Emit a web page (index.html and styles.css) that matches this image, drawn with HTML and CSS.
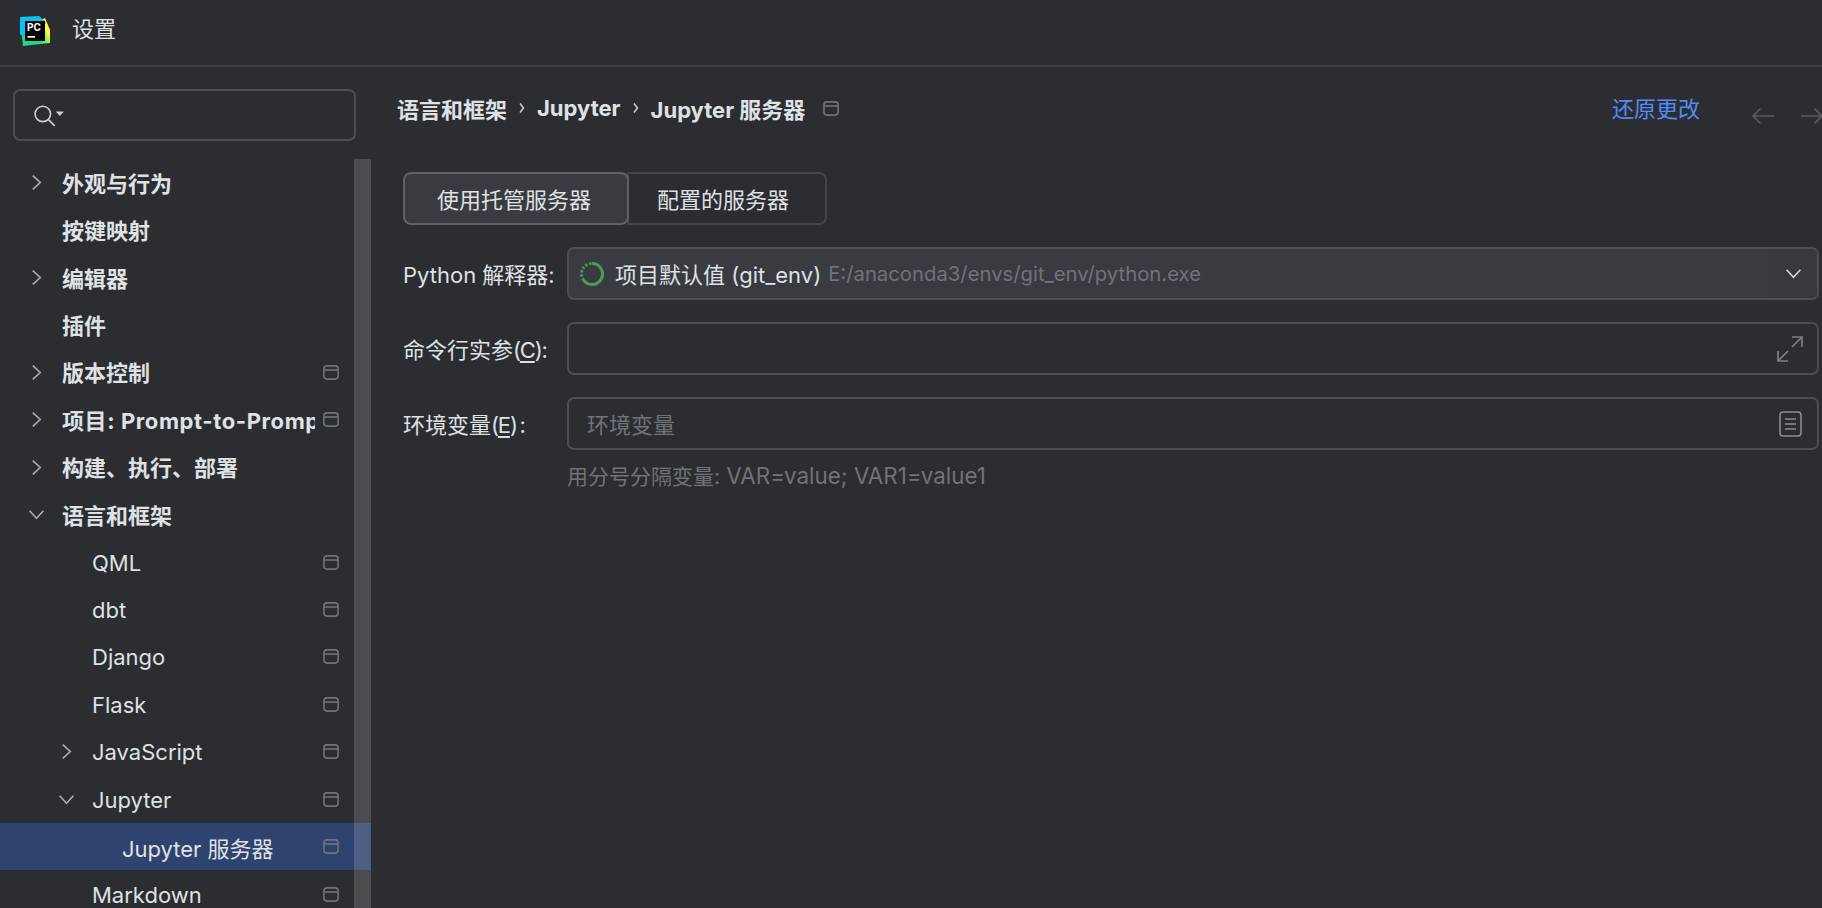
FILE: index.html
```html
<!DOCTYPE html>
<html lang="zh">
<head>
<meta charset="utf-8">
<title>设置</title>
<link rel="stylesheet" href="styles.css">
</head>
<body>
<svg class="defs" width="0" height="0" aria-hidden="true">
  <defs>
    <symbol id="pin" viewBox="0 0 16 15"><rect x="0.9" y="0.9" width="14.2" height="13.2" rx="3" fill="none" stroke="currentColor" stroke-width="1.6"/><path d="M1 5h14" stroke="currentColor" stroke-width="1.6"/></symbol>
    <symbol id="right" viewBox="0 0 10 16"><path d="M1.5 1.5 8.5 8l-7 6.5" fill="none" stroke="currentColor" stroke-width="1.6"/></symbol>
    <symbol id="down" viewBox="0 0 16 10"><path d="M1.5 1.5 8 8.5l6.5-7" fill="none" stroke="currentColor" stroke-width="1.6"/></symbol>
  </defs>
</svg>
<header class="titlebar">
  <svg class="logo" viewBox="0 0 30 30" aria-hidden="true">
    <defs>
      <linearGradient id="lg" x1="0" y1="1" x2="1" y2="0.2"><stop offset="0" stop-color="#21d789"/><stop offset="0.45" stop-color="#21d789"/><stop offset="0.8" stop-color="#fcf84a"/></linearGradient>
    </defs>
    <path d="M2 20 3 30 30 27 30 14 25 2 10 10Z" fill="url(#lg)"/>
    <path d="M0 1 19 0 26 6 20 20 2 20 0 18Z" fill="#07c3f2"/>
    <rect x="5" y="5" width="20" height="20" fill="#000"/>
    <rect x="7.5" y="20" width="7.5" height="1.7" fill="#fff"/>
    <text x="7" y="15" class="logo-text">PC</text>
  </svg>
  <span class="title">设置</span>
</header>
<div class="layout">
  <aside class="sidebar">
    <div class="search">
      <svg class="search-icon" viewBox="0 0 32 22" aria-hidden="true"><circle cx="9.5" cy="9.5" r="7.5" fill="none" stroke="#ced0d6" stroke-width="1.6"/><path d="m15 15 6 6" stroke="#ced0d6" stroke-width="1.6" fill="none"/><path d="M22 7h8l-4 4.500z" fill="#ced0d6"/></svg>
    </div>
    <nav class="tree">
      <div class="row top"><svg class="chev"><use href="#right"/></svg><span class="label">外观与行为</span></div>
      <div class="row top"><span class="chev"></span><span class="label">按键映射</span></div>
      <div class="row top"><svg class="chev"><use href="#right"/></svg><span class="label">编辑器</span></div>
      <div class="row top"><span class="chev"></span><span class="label">插件</span></div>
      <div class="row top"><svg class="chev"><use href="#right"/></svg><span class="label">版本控制</span><svg class="pin"><use href="#pin"/></svg></div>
      <div class="row top"><svg class="chev"><use href="#right"/></svg><span class="label label-wide">项目: Prompt-to-Prompt</span><svg class="pin"><use href="#pin"/></svg></div>
      <div class="row top"><svg class="chev"><use href="#right"/></svg><span class="label">构建、执行、部署</span></div>
      <div class="row top"><svg class="chev chev-down"><use href="#down"/></svg><span class="label">语言和框架</span></div>
      <div class="row lvl2"><span class="chev"></span><span class="label">QML</span><svg class="pin"><use href="#pin"/></svg></div>
      <div class="row lvl2"><span class="chev"></span><span class="label">dbt</span><svg class="pin"><use href="#pin"/></svg></div>
      <div class="row lvl2"><span class="chev"></span><span class="label">Django</span><svg class="pin"><use href="#pin"/></svg></div>
      <div class="row lvl2"><span class="chev"></span><span class="label">Flask</span><svg class="pin"><use href="#pin"/></svg></div>
      <div class="row lvl2"><svg class="chev"><use href="#right"/></svg><span class="label">JavaScript</span><svg class="pin"><use href="#pin"/></svg></div>
      <div class="row lvl2"><svg class="chev chev-down"><use href="#down"/></svg><span class="label">Jupyter</span><svg class="pin"><use href="#pin"/></svg></div>
      <div class="row lvl3 selected"><span class="chev"></span><span class="label">Jupyter 服务器</span><svg class="pin"><use href="#pin"/></svg></div>
      <div class="row lvl2"><span class="chev"></span><span class="label">Markdown</span><svg class="pin"><use href="#pin"/></svg></div>
      <div class="scrollbar"></div>
    </nav>
  </aside>
  <main class="content">
    <div class="head">
      <div class="crumbs">
        <span>语言和框架</span>
        <svg class="sep" viewBox="0 0 6 12" aria-hidden="true"><path d="M1 1.500 4.500 6 1 10.500" fill="none" stroke="currentColor" stroke-width="1.500"/></svg>
        <span>Jupyter</span>
        <svg class="sep" viewBox="0 0 6 12" aria-hidden="true"><path d="M1 1.500 4.500 6 1 10.500" fill="none" stroke="currentColor" stroke-width="1.500"/></svg>
        <span>Jupyter 服务器</span>
        <svg class="pin crumb-pin"><use href="#pin"/></svg>
      </div>
      <a class="revert">还原更改</a>
      <svg class="arrow arrow-left" viewBox="0 0 24 18" aria-hidden="true"><path d="M23 9H2M9.500 1.500 2 9l7.500 7.500" fill="none" stroke="currentColor" stroke-width="1.600"/></svg>
      <svg class="arrow arrow-right" viewBox="0 0 24 18" aria-hidden="true"><path d="M1 9h21M14.500 1.500 22 9l-7.500 7.500" fill="none" stroke="currentColor" stroke-width="1.600"/></svg>
    </div>
    <div class="segments">
      <div class="seg active">使用托管服务器</div>
      <div class="seg second">配置的服务器</div>
    </div>
    <form class="form">
      <label class="flabel">Python 解释器:</label>
      <div class="field combo">
        <svg class="spinner" viewBox="0 0 26 26" aria-hidden="true"><path d="M13 2.500A10.500 10.500 0 1 1 4.500 19.200" fill="none" stroke="#499c54" stroke-width="3"/><path d="M4.500 19.200A10.500 10.500 0 0 1 13 2.500" fill="none" stroke="#499c54" stroke-width="3" stroke-dasharray="2.200 1.800"/></svg>
        <span class="combo-value">项目默认值 (git_env)</span>
        <span class="combo-path">E:/anaconda3/envs/git_env/python.exe</span>
        <span class="combo-btn"><svg class="combo-arrow"><use href="#down"/></svg></span>
      </div>
      <label class="flabel">命令行实参<span class="mnemonic">(<u>C</u>):</span></label>
      <div class="field">
        <svg class="expand" viewBox="0 0 28 28" aria-hidden="true"><path d="M16 2h10v10M26 2 16 12M2 16v10h10M2 26l10-10" fill="none" stroke="currentColor" stroke-width="1.700"/></svg>
      </div>
      <label class="flabel">环境变量<span class="mnemonic">(<u>E</u>)&thinsp;:</span></label>
      <div class="field">
        <span class="placeholder">环境变量</span>
        <svg class="doc" viewBox="0 0 23 26" aria-hidden="true"><rect x="1" y="1" width="21" height="24" rx="3" fill="none" stroke="currentColor" stroke-width="1.600"/><path d="M6 8h11M6 13h11M6 18h11" stroke="currentColor" stroke-width="1.600"/></svg>
      </div>
      <span></span>
      <div class="hint"><span class="hint-cjk">用分号分隔变量:</span> VAR=value; VAR1=value1</div>
    </form>
  </main>
</div>
</body>
</html>
```
FILE: styles.css
```css
* { box-sizing: border-box; }
html, body { margin: 0; height: 100%; }
body {
  background: #2b2d30;
  color: #dfe1e5;
  font-family: Inter, "Noto Sans CJK SC", sans-serif;
  font-size: 22px;
  overflow: hidden;
}
.defs { position: absolute; }

.titlebar {
  height: 67px;
  border-bottom: 2px solid #3c3e42;
  display: flex;
  align-items: center;
  padding: 0 0 6px 20px;
}
.logo { width: 30px; height: 30px; margin-top: 2px; }
.logo-text { font: 700 10px Inter, sans-serif; fill: #fff; }
.title { margin: 0 0 5px 22px; }

.layout { display: flex; height: 841px; }
.sidebar { width: 371px; flex: none; display: flex; flex-direction: column; }
.search {
  margin: 22px 0 0 13px;
  width: 343px;
  height: 52px;
  border: 2px solid #4c4e53;
  border-radius: 7px;
  display: flex;
  align-items: center;
  padding-left: 18px;
}
.search-icon { width: 33px; height: 23px; }

.tree { position: relative; margin-top: 18px; flex: 1; overflow: hidden; }
.row {
  height: 47.43px;
  display: flex;
  align-items: center;
  white-space: nowrap;
}
.top { padding-left: 31px; font-weight: 700; }
.top .label { padding-bottom: 2px; }
.lvl2 { padding-left: 61px; }
.lvl2 .label { padding-top: 1px; }
.lvl3 { padding-left: 91px; }
.chev { width: 11px; height: 17px; margin-right: 20px; flex: none; color: #a8abb0; }
.chev-down { width: 17px; height: 11px; margin: 0 17px 0 -3px; }
.label { flex: 1; min-width: 0; overflow: hidden; margin-right: 8px; }
.label-wide { letter-spacing: 0.6px; }
.pin { width: 16px; height: 15px; margin-right: 32px; flex: none; color: #6f737a; }
.selected { background: #2e436e; }
.scrollbar {
  position: absolute;
  top: 0; bottom: 0; right: 0;
  width: 17px;
  background: rgba(255, 255, 255, 0.15);
}

.content { flex: 1; min-width: 0; padding-left: 26px; overflow: hidden; }
.head { height: 40px; margin-top: 21px; display: flex; align-items: center; }
.crumbs { display: flex; align-items: center; font-weight: 700; }
.sep { width: 6px; height: 12px; margin: 0 12px; color: #ced0d6; }
.crumb-pin { margin: 0 0 0 18px; }
.revert { margin-left: auto; margin-right: 1px; padding-bottom: 2px; color: #548af7; }
.arrow { width: 24px; height: 18px; color: #5a5d63; flex: none; margin-top: 16px; }
.arrow-left { margin-left: 50px; }
.arrow-right { margin: 16px -2px 0 25px; }

.segments { display: flex; margin: 44px 0 0 6px; height: 53px; }
.seg { display: flex; align-items: center; justify-content: center; padding-bottom: 1px; }
.seg.active {
  width: 226px;
  padding-right: 4px;
  background: #393b40;
  border: 2px solid #5e6167;
  border-radius: 8px;
  position: relative;
  z-index: 1;
}
.seg.second {
  width: 200px;
  padding-right: 8px;
  margin-left: -2px;
  border: 2px solid #43454a;
  border-radius: 0 8px 8px 0;
}

.form {
  display: grid;
  grid-template-columns: 164px 1252px;
  grid-auto-rows: 53px;
  row-gap: 22px;
  margin: 22px 0 0 6px;
  align-items: center;
}
.flabel { white-space: nowrap; padding-bottom: 2px; }
.mnemonic { letter-spacing: -1.2px; }
.flabel u { text-underline-offset: 3px; }
.field {
  height: 53px;
  border: 2px solid #4c4e53;
  border-radius: 7px;
  display: flex;
  align-items: center;
  position: relative;
}
.combo { background: #393b40; padding-left: 10px; overflow: hidden; }
.spinner { width: 26px; height: 26px; flex: none; margin-right: 10px; }
.combo-value { white-space: nowrap; padding-bottom: 2px; }
.combo-path { color: #6f737a; font-size: 20.3px; margin-left: 7px; white-space: nowrap; }
.combo-btn {
  margin-left: auto;
  width: 49px;
  align-self: stretch;
  background: #38393e;
  display: flex;
  align-items: center;
  justify-content: center;
}
.combo-arrow { width: 17px; height: 11px; color: #ced0d6; margin-left: 2px; }
.expand { width: 28px; height: 28px; margin-left: auto; margin-right: 13px; color: #7d8087; }
.placeholder { color: #6f737a; margin-left: 18px; padding-bottom: 2px; }
.doc { width: 23px; height: 26px; margin-left: auto; margin-right: 15px; color: #8a8d93; }
.hint { color: #6f737a; font-size: 22.4px; align-self: start; margin-top: -12px; white-space: nowrap; }
.hint-cjk { font-size: 21px; }
```
